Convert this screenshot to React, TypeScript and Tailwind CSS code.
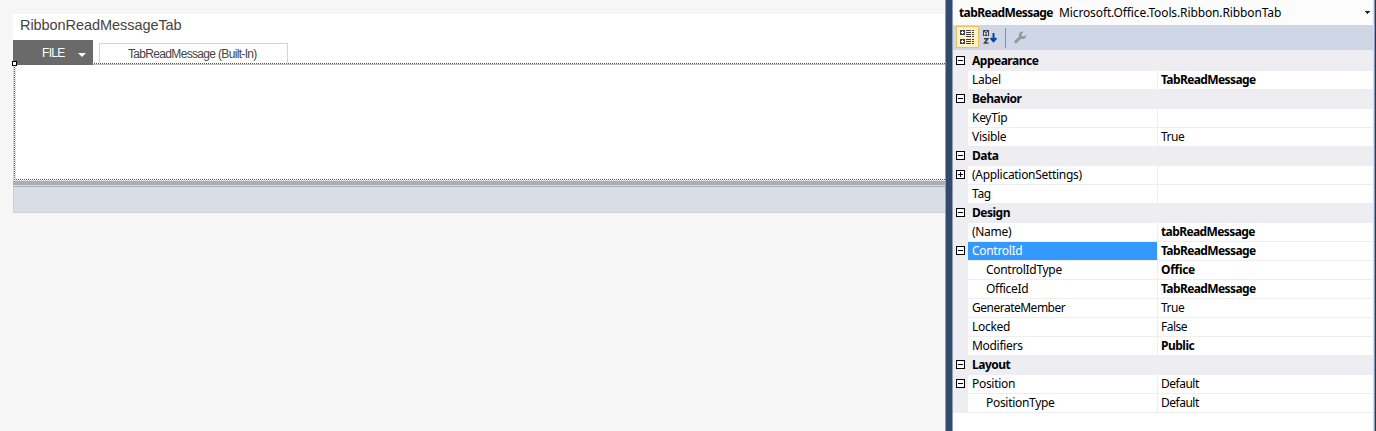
import type { ReactNode } from "react";

type Row = { name: string; value?: string; bold?: boolean; header?: boolean; box?: "-" | "+"; child?: boolean; selected?: boolean; nt: string; vt?: string };

const T = "tracking-[-0.3px]";
const TIGHT = "tracking-[-0.5px]";
const VALUE_TIGHT = "tracking-[-0.6px]";
const rows: Row[] = [
  { name: "Appearance", header: true, box: "-", nt: TIGHT },
  { name: "Label", value: "TabReadMessage", bold: true, nt: T, vt: VALUE_TIGHT },
  { name: "Behavior", header: true, box: "-", nt: TIGHT },
  { name: "KeyTip", nt: T },
  { name: "Visible", value: "True", nt: T, vt: TIGHT },
  { name: "Data", header: true, box: "-", nt: TIGHT },
  { name: "(ApplicationSettings)", box: "+", nt: T },
  { name: "Tag", nt: T },
  { name: "Design", header: true, box: "-", nt: TIGHT },
  { name: "(Name)", value: "tabReadMessage", bold: true, nt: T, vt: VALUE_TIGHT },
  { name: "ControlId", value: "TabReadMessage", bold: true, box: "-", selected: true, nt: T, vt: VALUE_TIGHT },
  { name: "ControlIdType", value: "Office", bold: true, child: true, nt: T, vt: T },
  { name: "OfficeId", value: "TabReadMessage", bold: true, child: true, nt: T, vt: VALUE_TIGHT },
  { name: "GenerateMember", value: "True", nt: TIGHT, vt: TIGHT },
  { name: "Locked", value: "False", nt: T, vt: TIGHT },
  { name: "Modifiers", value: "Public", bold: true, nt: T, vt: TIGHT },
  { name: "Layout", header: true, box: "-", nt: TIGHT },
  { name: "Position", value: "Default", box: "-", nt: T, vt: TIGHT },
  { name: "PositionType", value: "Default", child: true, nt: T, vt: TIGHT },
];

function Expander({ kind }: { kind?: "-" | "+" }) {
  return (
    <div className="h-[19px] w-[15px] shrink-0 bg-[#eeedf2] pt-[4px] pl-[3px]">
      {kind && (
        <svg width="9" height="9" viewBox="0 0 9 9" shapeRendering="crispEdges" className="block">
          <path d="M.5.5h8v8h-8z" fill="#fff" stroke="#000" />
          <path d={kind === "+" ? "M2 4.5h5M4.5 2v5" : "M2 4.5h5"} stroke="#000" />
        </svg>
      )}
    </div>
  );
}

function Label({ children, className }: { children?: ReactNode; className: string }) {
  return <span className={`block whitespace-nowrap leading-[18px] ${className}`}>{children}</span>;
}

function PropertyRow({ row }: { row: Row }) {
  if (row.header) {
    return (
      <div className="flex h-[19px] bg-[#eeedf2]">
        <Expander kind={row.box} />
        <Label className={`pl-[4px] font-bold ${row.nt}`}>{row.name}</Label>
      </div>
    );
  }
  return (
    <div className="flex h-[19px]">
      <Expander kind={row.box} />
      <div className={`w-[189px] border-b border-[#eeedf2] ${row.selected ? "bg-[#3399ff] text-white" : "bg-white"}`}>
        <Label className={`${row.child ? "pl-[18px]" : "pl-[4px]"} ${row.nt}`}>{row.name}</Label>
      </div>
      <div className="flex-1 border-b border-l border-[#eeedf2] bg-white">
        <Label className={`pl-[3px] ${row.bold ? "font-bold" : ""} ${row.vt ?? ""}`}>{row.value}</Label>
      </div>
    </div>
  );
}

function CategorizedIcon() {
  return (
    <svg width="15" height="15" viewBox="0 0 15 15" shapeRendering="crispEdges">
      <path d="M0 0h5v5H0zM0 9h5v5H0z" fill="#424242" />
      <path d="M1 2.5h3M2.5 1v3M1 11.5h3M2.5 10v3" stroke="#fff" />
      <path d="M6 .5h5M12 .5h2M6 2.5h5M12 2.5h2M6 4.5h5M12 4.5h2M6 6.5h5M12 6.5h2M6 9.5h5M12 9.5h2M6 11.5h5M12 11.5h2M6 13.5h5M12 13.5h2" stroke="#424242" />
    </svg>
  );
}

function SortIcon() {
  return (
    <svg width="15" height="15" viewBox="0 0 15 15">
      <path d="M0 0h6v6H0z" fill="#424242" />
      <path d="M1.500 5.500V2.500L3 1.300l1.500 1.200v3M2 3.800h2" fill="none" stroke="#fff" strokeWidth=".8" />
      <path d="M1 8.800h3.700L1.500 13H5.500" fill="none" stroke="#424242" strokeWidth="1.6" />
      <path d="M10.500 3v8.500M7.700 8l2.800 3.200 2.800-3.200" fill="none" stroke="#0047a5" strokeWidth="2" />
    </svg>
  );
}

function WrenchIcon() {
  return (
    <svg width="13" height="13" viewBox="0 0 13 13">
      <path d="M1.900 10.700 7 5.800" stroke="#999" strokeWidth="3" strokeLinecap="round" />
      <path d="M9.800.7 7.600 2.900l.3 2.200 2.200.3 2.200-2.200c.6 2.400-1.100 4.800-3.700 4.800C6 8 4.500 6.200 4.800 3.900 5.100 1.500 7.500 0 9.800.7Z" fill="#999" />
    </svg>
  );
}

function Designer() {
  return (
    <div className="h-full w-[945px] shrink-0 bg-[#f6f6f6] pt-[14px] pl-[13px]">
      <div className="flex h-[26px] items-start bg-white pl-[7px] font-['Liberation_Sans',sans-serif] text-[14.5px] leading-[23px] tracking-[-0.06px] text-[#444]">
        RibbonReadMessageTab
      </div>
      <div className="flex h-[23px] bg-white font-['Liberation_Sans',sans-serif]">
        <div className="relative z-10 flex h-[25px] w-[80px] shrink-0 bg-[#6a6a6a] pl-[29px] text-[12px] leading-[26px] tracking-[-0.7px] text-white">
          <span className="w-[36px]">FILE</span>
          <svg width="8" height="4" viewBox="0 0 8 4" className="mt-[13px]">
            <path d="M0 0h8L4 4z" fill="#fff" />
          </svg>
        </div>
        <div className="mt-[3px] ml-[6px] h-[20px] w-[189px] border border-b-0 border-[#d2d4d4] pl-[28px] text-[12px] leading-[21px] tracking-[-0.67px] whitespace-nowrap text-[#444]">
          TabReadMessage (Built-In)
        </div>
      </div>
      <div className="relative h-[118px] border-l border-[#d5d5d5] bg-white">
        <svg width="931" height="118" viewBox="0 0 931 118" shapeRendering="crispEdges" className="block">
          <path d="M79 1.500H931" stroke="#bbb" />
          <path d="M0 .5H931M0 116.500H931M.5 0V117" stroke="#555" strokeDasharray="1 1" />
          <path d="M1 117.500H931M1.500 1V117" stroke="#ccc" strokeDasharray="1 1" />
        </svg>
        <div className="absolute top-[-2px] left-[-2px] z-20 h-[5px] w-[5px] border border-black bg-white" />
      </div>
      <div className="h-[4px] bg-[#abadb9]" />
      <div className="h-px bg-[#d5d9e0]" />
      <div className="h-px bg-[#abadb9]" />
      <div className="h-[26px] border-b border-l border-[#cfd1d4] bg-[#d9dde6]" />
    </div>
  );
}

export default function App() {
  return (
    <div className="flex h-[431px] w-[1376px] overflow-hidden bg-white">
      <Designer />
      <div className="w-[8px] shrink-0 border-x border-[#8e9bbc] bg-[#35496a]" />
      <div className="flex w-[420px] shrink-0 flex-col bg-white font-['Noto_Sans',sans-serif] text-[12px] text-black">
        <div className="flex h-[25px] items-center bg-[#fcfcfc] pl-[6px] leading-[25px] whitespace-nowrap">
          <span className="w-[100px] font-bold tracking-[-0.6px]">tabReadMessage</span>
          <span className="flex-1 tracking-[-0.12px]">Microsoft.Office.Tools.Ribbon.RibbonTab</span>
          <svg width="5" height="3" viewBox="0 0 5 3" shapeRendering="crispEdges" className="mr-[3px]">
            <path d="M0 0h5v1H4v1H3v1H2V2H1V1H0z" fill="#1b293e" />
          </svg>
        </div>
        <div className="flex h-[25px] bg-[#cfd6e5] pt-[1px] pl-[3px]">
          <div className="h-[22px] w-[23px] border border-[#e5c365] bg-[#fff0c8] pt-[3px] pl-[3px]"><CategorizedIcon /></div>
          <div className="mt-[4px] ml-[4px]"><SortIcon /></div>
          <div className="mt-[2px] ml-[7px] h-[20px] w-px bg-[#8591a2]" />
          <div className="mt-[5px] ml-[8px]"><WrenchIcon /></div>
        </div>
        <div className="h-[2px] bg-[#eeedf2]" />
        {rows.map((r) => <PropertyRow key={r.name} row={r} />)}
      </div>
      <div className="w-px bg-[#d6dbe9]" />
      <div className="w-px bg-[#8e9bbc]" />
      <div className="w-px bg-[#293955]" />
    </div>
  );
}
